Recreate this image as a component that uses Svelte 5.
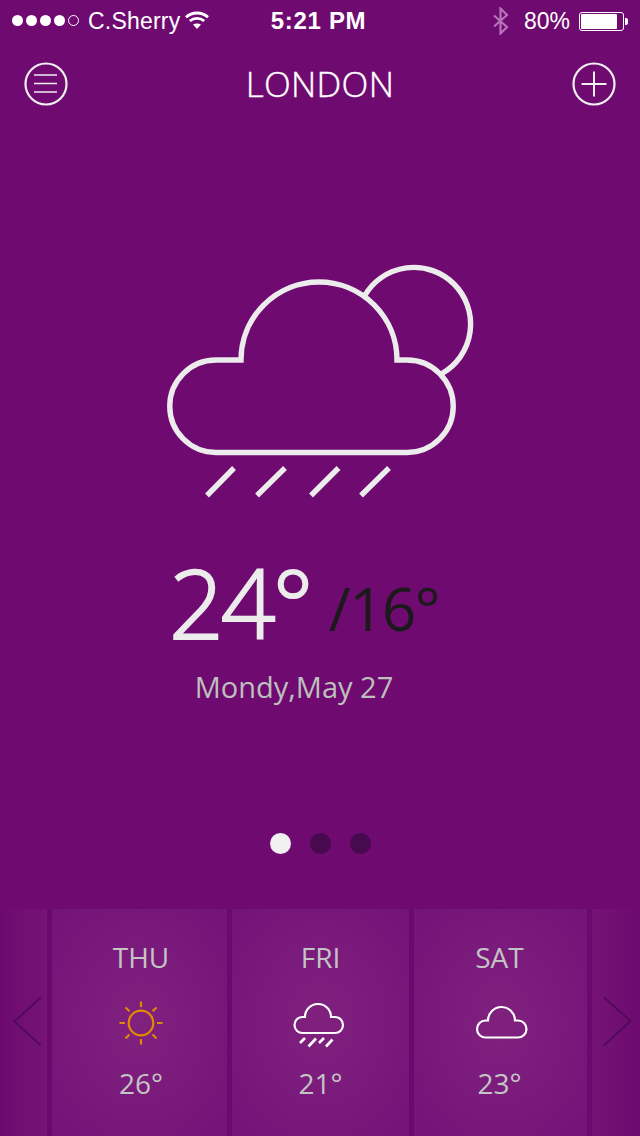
<script>
  const days = [
    { id: 'thu', label: 'THU', temp: '26°' },
    { id: 'fri', label: 'FRI', temp: '21°' },
    { id: 'sat', label: 'SAT', temp: '23°' }
  ];
</script>

<div class="page">
  <div class="status">
    <div class="left">
      <span class="signal"><i></i><i></i><i></i><i></i><i class="off"></i></span>
      <span class="carrier">C.Sherry</span>
      <svg class="wifi" width="24" height="20" viewBox="0 0 24 20" fill="none" stroke="#fff" stroke-width="2.8">
        <path d="M1 7.2C7 1.6 17 1.6 23 7.2" />
        <path d="M4.8 11C9 7.4 15 7.4 19.2 11" />
        <path d="M12 19L8 14.6C10.4 13 13.6 13 16 14.6Z" fill="#fff" stroke="none" />
      </svg>
    </div>
    <div class="time">5:21 PM</div>
    <div class="right">
      <svg class="bt" width="18" height="28" viewBox="0 0 18 28" fill="none" stroke="#b574b8" stroke-width="2.2">
        <path d="M2 8.5L15 20L8.5 26.5V1.5L15 8L2 19.5" />
      </svg>
      <span class="batt-text">80%</span>
      <span class="battery"><span class="fill"></span></span>
      <span class="nub"></span>
    </div>
  </div>

  <header class="header">
    <svg width="44" height="44" viewBox="0 0 44 44" fill="none" stroke="#f0f0f0">
      <circle cx="22" cy="22" r="20.5" stroke-width="2.2" />
      <path d="M10 13H33M10 21.5H33M10 30H33" stroke-width="1.6" />
    </svg>
    <h1>LONDON</h1>
    <svg width="44" height="44" viewBox="0 0 44 44" fill="none" stroke="#f0f0f0">
      <circle cx="22" cy="22" r="20.5" stroke-width="2.2" />
      <path d="M9.5 22H34.5M22 9.5V34.5" stroke-width="2" />
    </svg>
  </header>

  <svg class="hero" width="320" height="245" viewBox="160 260 320 245" fill="none" stroke="#ececec" stroke-width="5.4">
    <path d="M364.5 296A56.8 56.8 0 1 1 442 373.5" />
    <path d="M216 360H241A78 78 0 0 1 397 360H407A46.2 46.2 0 0 1 407 452.5H216A46.2 46.2 0 0 1 216 360Z" stroke-linejoin="miter" />
    <path d="M207 495.5L234 468M257 495.5L285 468M311 495.5L338.5 468M361 495.5L389 468" />
  </svg>

  <div class="temps">
    <span class="hi">24°</span>
    <span class="lo">/16°</span>
  </div>
  <div class="date">Mondy,May 27</div>

  <div class="dots"><i class="on"></i><i></i><i></i></div>

  <div class="strip">
    <div class="side">
      <svg width="30" height="52" viewBox="0 0 30 52" fill="none" stroke="#520a5c" stroke-width="2">
        <path d="M27.7 1.5L1.5 25.5L27.7 49.5" />
      </svg>
    </div>
    {#each days as day}
      <div class="card {day.id}">
        <div class="label">{day.label}</div>
        <div class="icon">
          {#if day.id === 'thu'}
            <svg width="46" height="46" viewBox="0 0 46 46" fill="none" stroke="#e08a00" stroke-width="2.2">
              <circle cx="23" cy="23" r="12.3" />
              <path d="M23 1.5V7M23 39V44.5M1.5 23H7M39 23H44.5M7.5 7.5L11.5 11.2M38.5 7.5L34.5 11.2M7.5 38.5L11.5 34.5M38.5 38.5L34.5 34.5" />
            </svg>
          {:else if day.id === 'fri'}
            <svg width="54" height="48" viewBox="0 0 54 48" fill="none" stroke="#fff" stroke-width="2.2">
              <path d="M10.5 17H13A13 13 0 0 1 39 17H43A8 8 0 0 1 43 33H10.5A8 8 0 0 1 10.5 17Z" />
              <path d="M8 43L13 38M16.5 46.5L24 38.5M27 43L32 38M34 46.5L40.5 39.5" stroke-width="2.6" />
            </svg>
          {:else}
            <svg width="54" height="46" viewBox="0 0 54 46" fill="none" stroke="#fff" stroke-width="2.2">
              <path d="M10.5 20.5H13A13.5 13.5 0 0 1 40 20.5H43A8.5 8.5 0 0 1 43 37.5H10.5A8.5 8.5 0 0 1 10.5 20.5Z" />
            </svg>
          {/if}
        </div>
        <div class="temp">{day.temp}</div>
      </div>
    {/each}
    <div class="side end">
      <svg width="30" height="52" viewBox="0 0 30 52" fill="none" stroke="#520a5c" stroke-width="2">
        <path d="M2 1.5L28.5 25L2 49.5" />
      </svg>
    </div>
  </div>
</div>

<style>
  :global(body) {
    margin: 0;
    background: #6f0a70;
  }
  .page {
    width: 640px;
    height: 1136px;
    background: #6f0a70;
    display: flex;
    flex-direction: column;
    overflow: hidden;
    font-family: "Open Sans", sans-serif;
    font-weight: 400;
  }
  .status {
    height: 40px;
    padding: 2px 12px 0;
    box-sizing: border-box;
    display: grid;
    grid-template-columns: 1fr auto 1fr;
    align-items: center;
    color: #fff;
    font-family: "Liberation Sans", sans-serif;
    font-size: 23px;
  }
  .left, .right {
    display: flex;
    align-items: center;
  }
  .right { justify-content: flex-end; }
  .signal {
    display: flex;
    gap: 3px;
    margin-right: 9px;
    margin-top: -1px;
  }
  .signal i {
    width: 11px;
    height: 11px;
    border-radius: 50%;
    background: #fff;
    box-sizing: border-box;
  }
  .signal i.off {
    background: none;
    border: 1px solid #fff;
  }
  .carrier { letter-spacing: 0.2px; }
  .wifi { margin-left: 5px; margin-top: -3px; }
  .time {
    font-weight: 700;
    font-size: 24px;
    letter-spacing: 0.7px;
    margin-left: -3px;
  }
  .bt { margin-right: 14px; margin-left: -2px; }
  .batt-text { margin-right: 9px; }
  .battery {
    width: 45px;
    height: 19px;
    box-sizing: border-box;
    border: 1px solid #fff;
    border-radius: 3px;
    padding: 1px;
    display: flex;
  }
  .fill {
    width: 36px;
    background: #fff;
    border-radius: 1px;
  }
  .nub {
    width: 3px;
    height: 7px;
    margin-left: 1px;
    background: #fff;
    border-radius: 0 2px 2px 0;
  }
  .header {
    height: 88px;
    padding: 0 24px;
    display: flex;
    align-items: center;
    justify-content: space-between;
  }
  h1 {
    margin: 0 0 2px;
    font-weight: 300;
    font-size: 35px;
    letter-spacing: 0.3px;
    color: #fff;
    -webkit-text-stroke: 0.4px #fff;
  }
  .hero {
    display: block;
    margin: 132px auto 0;
  }
  .temps {
    margin-top: 42px;
    padding-right: 32px;
    display: flex;
    justify-content: center;
    align-items: flex-start;
    gap: 18px;
    height: 108px;
    line-height: 110px;
  }
  .hi {
    font-size: 96px;
    font-weight: 300;
    color: #ececec;
    letter-spacing: -3px;
    -webkit-text-stroke: 2px #ececec;
  }
  .lo {
    margin-top: 6px;
    font-size: 60px;
    color: #1a1a1a;
    letter-spacing: -1.5px;
  }
  .date {
    margin-top: 12px;
    padding-right: 52px;
    text-align: center;
    font-size: 29px;
    line-height: 40px;
    color: #bdc0bd;
  }
  .dots {
    margin-top: 126px;
    display: flex;
    justify-content: center;
    gap: 19px;
  }
  .dots i {
    width: 21px;
    height: 21px;
    border-radius: 50%;
    background: #470a4f;
  }
  .dots i.on { background: #f0f0f0; }
  .strip {
    margin-top: auto;
    height: 227px;
    display: grid;
    grid-template-columns: 47px 175px 177px 173px 48px;
    gap: 5px;
    background: #6b0a6e;
  }
  .side {
    background: linear-gradient(to right, #6d0a70, #751476);
    padding: 87px 0 0 13px;
    box-sizing: border-box;
  }
  .side.end {
    background: linear-gradient(to left, #6d0a70, #751476);
    padding-left: 10px;
  }
  .card {
    background: radial-gradient(ellipse at center, #80217f, #741378);
    display: flex;
    flex-direction: column;
    align-items: center;
    color: #c4c4c4;
  }
  .card.thu { padding-left: 3px; }
  .card.sat { padding-right: 2px; }
  .label {
    margin-top: 28px;
    font-size: 28px;
    line-height: 40px;
  }
  .icon {
    margin-top: 23px;
    height: 46px;
  }
  .icon svg { display: block; }
  .fri .icon svg { margin-right: 4px; }
  .sat .icon svg { margin-left: 4px; }
  .temp {
    margin-top: 17px;
    font-size: 28px;
    line-height: 40px;
  }
</style>
